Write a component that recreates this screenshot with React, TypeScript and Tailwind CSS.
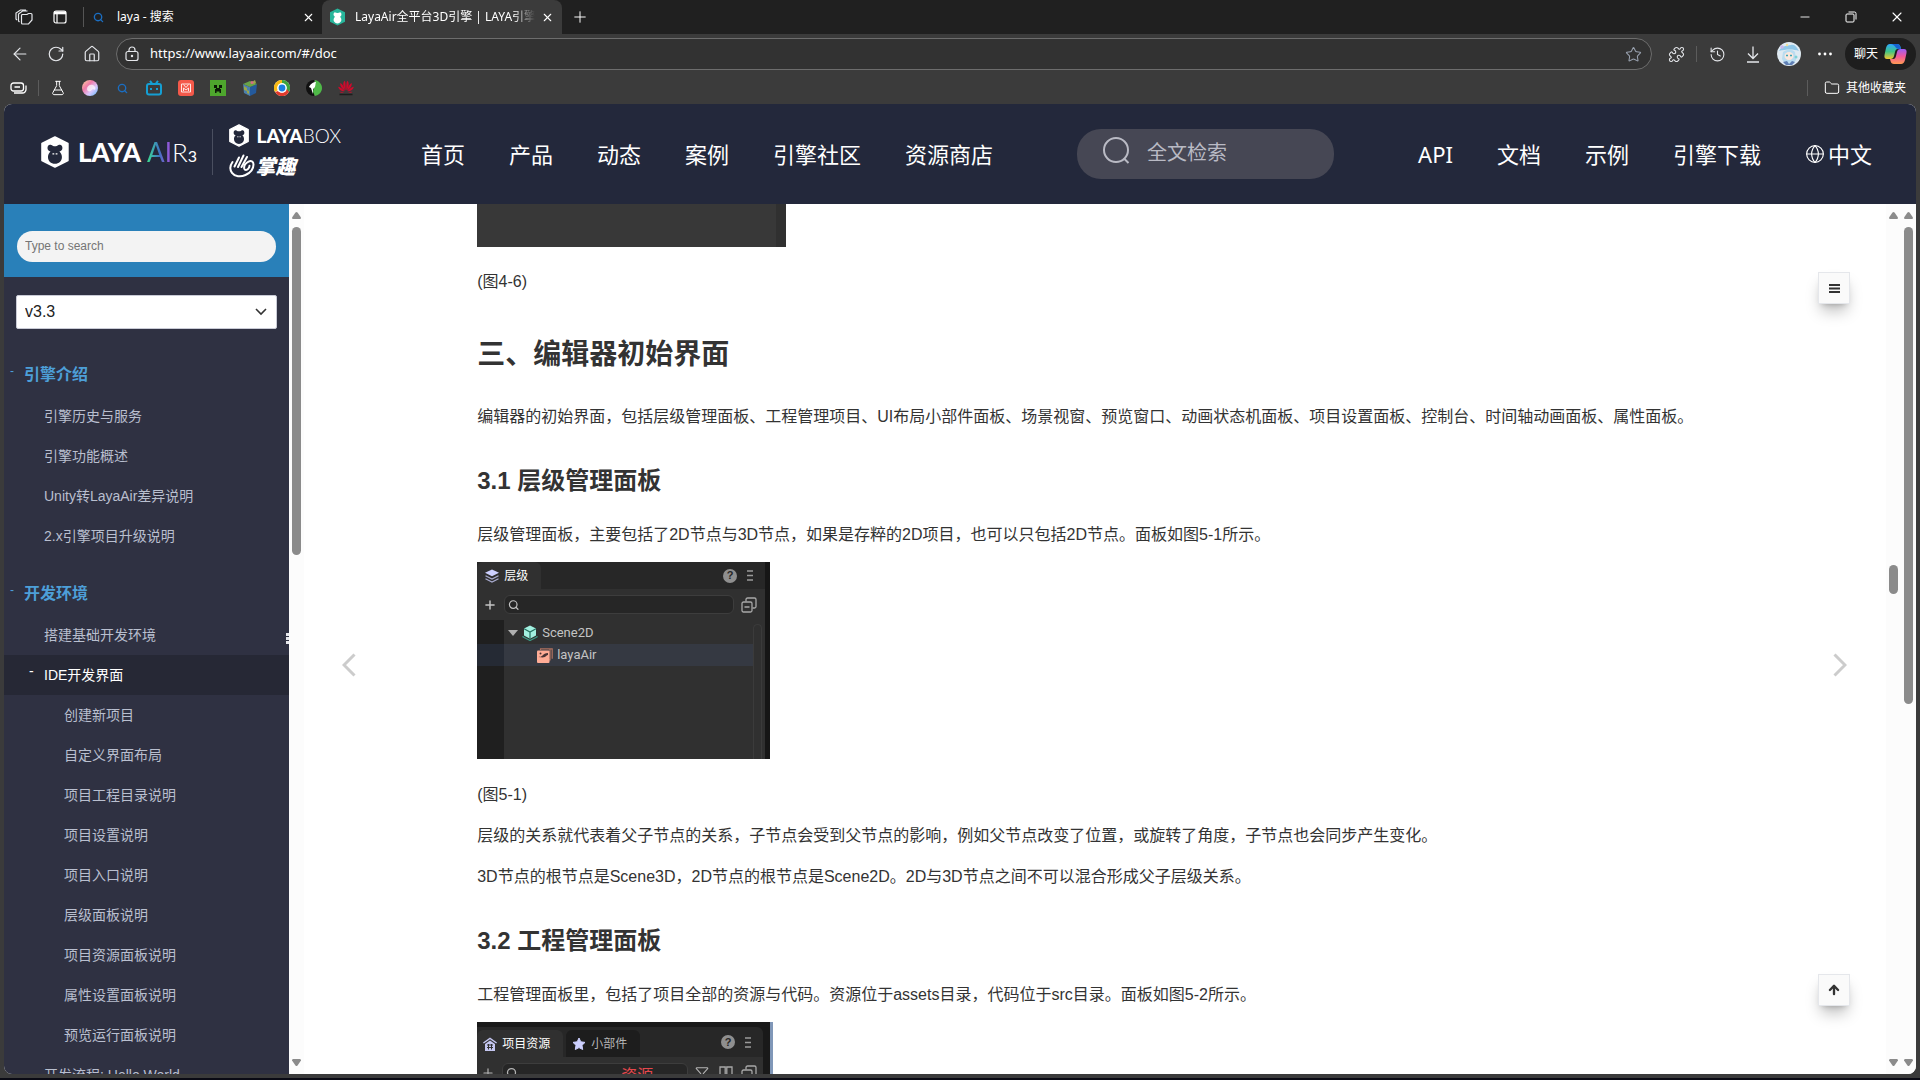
import React, { useState } from "react";
import {
  ArrowDown,
  ArrowLeft,
  FlaskConical,
  Folder,
  Funnel,
  Globe,
  History,
  House,
  Minus,
  Plus,
  Puzzle,
  RotateCw,
  Search,
  Star,
  X,
} from "lucide-react";

const mainLinks = ["首页", "产品", "动态", "案例", "引擎社区", "资源商店"];
const sideLinks = ["API", "文档", "示例", "引擎下载"];

const introItems = [
  "引擎历史与服务",
  "引擎功能概述",
  "Unity转LayaAir差异说明",
  "2.x引擎项目升级说明",
];

const ideItems = [
  "创建新项目",
  "自定义界面布局",
  "项目工程目录说明",
  "项目设置说明",
  "项目入口说明",
  "层级面板说明",
  "项目资源面板说明",
  "属性设置面板说明",
  "预览运行面板说明",
];

function Monkey({ className }: { className: string }) {
  return (
    <svg viewBox="0 0 28 32" className={className}>
      <path
        d="M14 1 27 7.500V24.500L14 31 1 24.500V7.500Z"
        fill="#fff"
        stroke="#fff"
        strokeWidth="1.600"
        strokeLinejoin="round"
      />
      <path
        d="M10.500 9C8 8 6.500 9.500 6.500 12c0 2 1.200 3.200 3 3.400C8 16.800 7 18.800 7 21c0 4 3 6.800 7 6.800s7-2.800 7-6.800c0-2.200-1-4.200-2.500-5.600 1.800-.2 3-1.400 3-3.400 0-2.500-1.500-4-4-3-1.200.9-2.200 1.200-3.500 1.200S11.700 9.900 10.500 9Z"
        fill="#23283b"
      />
      <path d="M11.500 17.800h1.800M14.700 17.800h1.800" stroke="#fff" strokeWidth="1.200" />
    </svg>
  );
}

function Hand() {
  return (
    <svg
      viewBox="0 0 26 24"
      className="h-6 w-[26px]"
      fill="none"
      stroke="#fff"
      strokeWidth="2"
      strokeLinecap="round"
    >
      <path d="M3.500 8C1 11.500.6 15.500 3 18.800c2.800 3.800 8.500 4.500 13.500 2.200 4.500-2 8-6 8-10.500 0-3-2.500-4.200-5-2.800-3 1.600-4.800 4.600-4.200 7 .5 1.800 2.600 1.600 3.800.2.900-1 1.400-2.200 1.400-3.200" />
      <path d="M5.500 12.500 10 3.500M9 13 14.500 1.500M12.500 13 18 3" />
    </svg>
  );
}

function Tabs() {
  return (
    <div className="flex h-[34px] shrink-0 items-center bg-[#202020] text-xs text-white">
      <button aria-label="工作区" className="ml-[15px] text-gray-200">
        <svg width="18" height="16" viewBox="0 0 18 16" fill="none" stroke="currentColor" strokeWidth="1.200">
          <path d="M7 5.500h5l1.500-1H16a1 1 0 0 1 1 1v5.500l-3.500 4H7.500A1 1 0 0 1 6.500 14V6.500Z" />
          <path d="M4.500 13 3.500 12V5l4-3h5M2 11 1 10V4l4.500-3H11" />
        </svg>
      </button>
      <button aria-label="标签页" className="ml-5">
        <svg width="14" height="14" viewBox="0 0 14 14" fill="none" stroke="#fff" strokeWidth="1.200">
          <rect x="1" y="1" width="12" height="12" rx="2" />
          <path d="M1 2.800h12" strokeWidth="3" />
          <path d="M4 4v9" />
        </svg>
      </button>
      <div className="ml-4 h-5 w-px bg-[#555]" />
      <div className="flex w-[238px] items-center pl-[9px]">
        <Search className="size-[11px] text-[#1b6ec2]" strokeWidth={3} />
        <span className="ml-[13px] flex-1">laya - 搜索</span>
        <button aria-label="关闭标签页">
          <X className="mr-[7px] size-[13px]" strokeWidth={2} />
        </button>
      </div>
      <div className="flex h-full w-[240px] items-center rounded-t-lg bg-[#3b3b3b] pl-2">
        <svg width="15" height="18" viewBox="0 0 28 32">
          <path d="M14 0 28 7v18l-14 7L0 25V7Z" fill="#28b59b" />
          <path
            d="M9 7c3 2 7 2 10 0 2 1 3 3 2 6-1 1-2 2-2 3 5 5 1 12-5 12S4 21 9 16c0-1-1-2-2-3-1-3 0-5 2-6Z"
            fill="#fff"
          />
        </svg>
        <span className="ml-[10px] w-[180px] overflow-hidden whitespace-nowrap mask-r-from-88%">
          LayaAir全平台3D引擎 | LAYA引擎官
        </span>
        <button aria-label="关闭标签页" className="ml-1.5">
          <X className="size-[13px]" strokeWidth={2} />
        </button>
      </div>
      <button aria-label="新建标签页" className="ml-[9px]">
        <Plus className="size-[18px]" strokeWidth={1.3} />
      </button>
      <div className="ml-auto flex items-center">
        <button aria-label="最小化" className="flex w-[46px] justify-center">
          <Minus className="size-[14px]" strokeWidth={1.5} />
        </button>
        <button aria-label="还原" className="flex w-[46px] justify-center">
          <svg width="12" height="12" viewBox="0 0 12 12" fill="none" stroke="#fff">
            <rect x="1" y="3" width="8" height="8" rx="1" />
            <path d="M3.500 1H9.500a1.500 1.500 0 0 1 1.500 1.500V8.500" />
          </svg>
        </button>
        <button aria-label="关闭" className="flex w-[46px] justify-center">
          <X className="size-4" strokeWidth={1.6} />
        </button>
      </div>
    </div>
  );
}

function AddressBar() {
  return (
    <div className="flex h-10 shrink-0 items-center bg-[#3b3b3b] text-gray-200">
      <button aria-label="后退" className="flex w-9 justify-center pl-1">
        <ArrowLeft className="size-5" strokeWidth={1.4} />
      </button>
      <button aria-label="刷新" className="flex w-9 justify-center pl-1">
        <RotateCw className="size-[18px]" strokeWidth={1.6} />
      </button>
      <button aria-label="主页" className="flex w-9 justify-center pl-1">
        <House className="size-[18px]" strokeWidth={1.6} />
      </button>
      <div className="ml-2 flex h-8 flex-1 items-center rounded-full border border-[#6d6d6d] bg-[#323232] pr-[9px] pl-2">
        <svg width="14" height="16" viewBox="0 0 14 16" fill="none" stroke="currentColor" strokeWidth="1.200">
          <rect x="1" y="5.500" width="12" height="9" rx="2" />
          <path d="M4 5.500V4a3 3 0 0 1 6 0v1.500" />
          <circle cx="7" cy="10" r=".6" fill="currentColor" />
        </svg>
        <input
          aria-label="地址"
          className="ml-[11px] flex-1 bg-transparent text-[13px] text-white outline-none"
          defaultValue="https://www.layaair.com/#/doc"
        />
        <Star className="size-[17px] text-gray-400" strokeWidth={1.5} />
      </div>
      <button aria-label="扩展" className="ml-4">
        <Puzzle className="size-[17px]" strokeWidth={1.5} />
      </button>
      <div className="ml-[11px] h-4 w-px bg-[#5c5c5c]" />
      <button aria-label="历史记录" className="ml-3">
        <History className="size-[17px]" strokeWidth={1.5} />
      </button>
      <button aria-label="下载" className="ml-5">
        <svg width="14" height="17" viewBox="0 0 14 17" fill="none" stroke="currentColor" strokeWidth="1.300">
          <path d="M7 .5V12M2 7.500l5 5 5-5M1 16h12" />
        </svg>
      </button>
      <button aria-label="个人资料" className="ml-[17px]">
        <svg width="24" height="24" viewBox="0 0 24 24">
          <circle cx="12" cy="12" r="12" fill="#dfeaf2" />
          <path d="M2 9C5 3 10 4 14 3s6 3 8 6c-5-2-13-2-20 0Z" fill="#8fc7e8" />
          <path d="M6 10c4-3 9-3 12 0l1 8-3 4H8l-3-5Z" fill="#b9dcf0" />
          <ellipse cx="12" cy="14" rx="4.500" ry="4" fill="#fbe7dd" />
          <path d="M9 13.500h2M13 13.500h2" stroke="#3aa6b9" strokeWidth="1.600" />
          <circle cx="5" cy="5" r="1.800" fill="#c9b6ea" />
          <circle cx="10" cy="3" r="1.200" fill="#efdf9a" />
          <circle cx="19" cy="15" r="1.500" fill="#7fd0d6" />
          <path d="M6 20l4-1 2 3 3-3 3 1-3 3H9Z" fill="#5f7fb5" />
        </svg>
      </button>
      <button aria-label="设置及其他" className="ml-[17px]">
        <svg width="14" height="4" viewBox="0 0 14 4" fill="#fff">
          <circle cx="1.500" cy="2" r="1.400" />
          <circle cx="7" cy="2" r="1.400" />
          <circle cx="12.500" cy="2" r="1.400" />
        </svg>
      </button>
      <button className="mr-1 ml-[13px] flex h-8 w-[71px] items-center justify-center gap-1.5 rounded-full bg-[#1e1e1e] text-xs text-white">
        聊天
        <svg width="23" height="20" viewBox="0 0 23 20">
          <defs>
            <linearGradient id="cpA" x1="0" y1="0" x2="0" y2="1">
              <stop offset="0" stopColor="#2fa8ff" />
              <stop offset=".5" stopColor="#3ec486" />
              <stop offset="1" stopColor="#f2c730" />
            </linearGradient>
            <linearGradient id="cpB" x1="0" y1="0" x2="0" y2="1">
              <stop offset="0" stopColor="#9b5cf6" />
              <stop offset=".5" stopColor="#f2589a" />
              <stop offset="1" stopColor="#ff9a52" />
            </linearGradient>
          </defs>
          <path d="M6 0h7c2 0 3 1 3.500 3l.5 2h-3c-2 0-2.500 1-3 3l-1 4c-.5 2-1.500 3-3.500 3H3c-2 0-3-1.500-2.500-4L2 4c.7-2.500 2-4 4-4Z" fill="url(#cpA)" />
          <path d="M6 0h7c2 0 3 1 3.500 3l.5 2h-3L12 4C11 2 9 0 6 0Z" fill="#1763d1" />
          <path d="M17 20h-7c-2 0-3-1-3.500-3L6 15h3c2 0 2.500-1 3-3l1-4c.5-2 1.500-3 3.500-3H20c2 0 3 1.500 2.500 4L21 16c-.7 2.500-2 4-4 4Z" fill="url(#cpB)" />
        </svg>
      </button>
    </div>
  );
}

function Bookmarks() {
  return (
    <div className="flex h-[30px] shrink-0 items-center bg-[#3b3b3b] pb-0.5 text-xs text-white">
      <button aria-label="收藏夹" className="ml-[10px]">
        <svg width="17" height="12" viewBox="0 0 17 12" fill="none" stroke="#fff" strokeWidth="1.300">
          <rect x="1" y="1" width="12.500" height="8" rx="2.500" />
          <path d="M4.500 5h5.500M4 11h8.500a3.500 3.500 0 0 0 3.500-3.500V3.500" />
        </svg>
      </button>
      <div className="ml-[11px] h-4 w-px bg-[#5c5c5c]" />
      <div className="ml-[11px] flex gap-4">
        <a href="#lab" aria-label="实验">
          <FlaskConical className="size-4" strokeWidth={1.5} />
        </a>
        <a href="#ball" aria-label="彩球">
          <svg width="16" height="16" viewBox="0 0 16 16">
            <defs>
              <linearGradient id="ball" x1="0" y1="0" x2="1" y2="1">
                <stop offset="0" stopColor="#ffd9a0" />
                <stop offset=".35" stopColor="#f07ba8" />
                <stop offset=".65" stopColor="#d9c8ff" />
                <stop offset="1" stopColor="#58b6f5" />
              </linearGradient>
            </defs>
            <circle cx="8" cy="8" r="8" fill="url(#ball)" />
            <path d="M5 9c0-3 3-5 6-4 2 1 3 3 2 5-1-1-3-1-4 1-2 1-4 0-4-2Z" fill="#fff" opacity=".7" />
          </svg>
        </a>
        <a href="#search" aria-label="搜索" className="flex size-4 items-center justify-center">
          <Search className="size-[11px] text-[#1b6ec2]" strokeWidth={3} />
        </a>
        <a href="#video" aria-label="视频">
          <svg width="16" height="16" viewBox="0 0 16 16" fill="none" stroke="#159fd3" strokeWidth="2">
            <rect x="1" y="4" width="14" height="10.500" rx="2" />
            <path d="M4 .8 6 3.500M12 .8 10 3.500M5 8v2M11 8v2" />
          </svg>
        </a>
        <a href="#red" aria-label="红书">
          <svg width="16" height="16" viewBox="0 0 16 16">
            <rect width="16" height="16" rx="3" fill="#f4594a" />
            <path d="M3.500 4h9v8h-9ZM5.500 4.500l2.500 3 2.500-3M5.500 11V8l2.500 2 2.500-2v3" fill="none" stroke="#ffe6e2" />
          </svg>
        </a>
        <a href="#mc" aria-label="方块">
          <svg width="16" height="16" viewBox="0 0 16 16">
            <rect width="16" height="16" fill="#4ea62d" />
            <path d="M4 5h3v3h2V5h3v3h-2v1h1v4h-1.500v-1.500h-3V13H5V9h1V8H4Z" fill="#0b1a06" />
          </svg>
        </a>
        <a href="#cube" aria-label="立方体">
          <svg width="16" height="16" viewBox="0 0 16 16">
            <path d="M1 4 8 7v9l-6-3Z" fill="#4b7fae" />
            <path d="M15 4 8 7v9l6-3Z" fill="#245a9c" />
            <path d="M1 4 8 1l7 3-7 3Z" fill="#68a248" />
            <path d="M2 6l3 2v3l-3-1ZM10 2l3-2 1 3-3 1ZM5 10l2 1v3l-2-1Z" fill="#9aa64a" />
            <circle cx="10" cy="2.500" r="1.500" fill="#d66a86" />
          </svg>
        </a>
        <a href="#ring" aria-label="圆环">
          <svg width="16" height="16" viewBox="0 0 16 16">
            <circle cx="8" cy="8" r="8" fill="#fff" />
            <path d="M8 0A8 8 0 0 0 1 12l3-2a5 5 0 0 1 4-7Z" fill="#f8b912" />
            <path d="M8 0a8 8 0 0 1 7 12l-3-2A5 5 0 0 0 8 3Z" fill="#3fa53c" />
            <path d="M1 12a8 8 0 0 0 14 0l-2-3a5.500 5.500 0 0 1-9 2Z" fill="#e03a2c" />
            <circle cx="8" cy="8" r="4.800" fill="#fff" />
            <circle cx="8" cy="8" r="3.400" fill="#1b7fe0" />
          </svg>
        </a>
        <a href="#leaf" aria-label="叶子">
          <svg width="16" height="16" viewBox="0 0 16 16">
            <path d="M8 0a8 8 0 0 0 0 16Z" fill="#111" />
            <path d="M9 0c4 1 7 4 7 8s-3 7-7 8L7 12Z" fill="#4fb948" />
            <path d="M3 7c2-4 5-5 7-5-1 3 0 5-3 7v5L5 8Z" fill="#fff" />
          </svg>
        </a>
        <a href="#huawei" aria-label="华为">
          <svg width="16" height="16" viewBox="0 0 16 16" fill="#cf0a2c">
            <path d="M7.600 10.500C5 7 4.500 3 6.500.8c1 .2 1.400 4 1.100 9.700ZM8.400 10.500C11 7 11.500 3 9.500.8c-1 .2-1.400 4-1.100 9.700Z" />
            <path d="M7 10.800C4 9 1.800 6 2.300 3c2 .8 4 4 4.700 7.800ZM9 10.800c3-1.800 5.200-4.800 4.700-7.800-2 .8-4 4-4.700 7.800Z" />
            <path d="M6.500 11.300C3 11.300.5 9.300.3 6.800c2 .3 4.500 2 6.200 4.500ZM9.500 11.300c3.500 0 6-2 6.200-4.500-2 .3-4.500 2-6.200 4.500ZM6 12c-1.500 1-3.500.8-4.500-.2ZM10 12c1.500 1 3.500.8 4.500-.2Z" />
            <path d="M1.500 14.500h13" stroke="#1d1d1d" strokeWidth="1.500" />
          </svg>
        </a>
      </div>
      <div className="mr-4 ml-auto h-4 w-px bg-[#5c5c5c]" />
      <a href="#other" className="mr-[14px] flex items-center gap-1.5">
        <Folder className="size-4" strokeWidth={1.5} />
        其他收藏夹
      </a>
    </div>
  );
}

function SiteHeader() {
  return (
    <header className="flex h-[100px] shrink-0 items-center bg-[#23283b] pr-11 pl-[37px] font-['Noto_Sans','Noto_Sans_CJK_SC',sans-serif] text-[22px] text-white">
      <a href="#home" className="flex w-[300px] shrink-0 items-center pb-[5px] font-['Lato',sans-serif]">
        <Monkey className="h-8 w-7" />
        <span className="ml-[9px] flex w-[127px] items-baseline text-[26px] leading-8">
          <span className="font-black">LAYA</span>
          <span className="ml-1.5 bg-linear-to-r from-[#3fe08a] via-[#3f6fc0] to-[#a44ae0] bg-clip-text text-transparent">
            AI
          </span>
          <span className="font-light">R</span>
          <span className="text-base">3</span>
        </span>
        <span className="ml-2 h-[46px] w-px bg-[#4a4f60]" />
        <span className="ml-4 flex flex-col">
          <span className="flex items-center text-[19px] leading-7">
            <Monkey className="h-[23px] w-5" />
            <span className="ml-[7px] font-black">LAYA</span>
            <span className="font-light">BOX</span>
          </span>
          <span className="flex items-center text-xl leading-8 font-black italic">
            <Hand />
            <span className="font-['Noto_Sans_CJK_SC',sans-serif]">掌趣</span>
          </span>
        </span>
      </a>
      <nav className="ml-20 flex gap-11 whitespace-nowrap">
        {mainLinks.map((link) => (
          <a key={link} href={`#${link}`}>
            {link}
          </a>
        ))}
      </nav>
      <label className="ml-[84px] flex h-[50px] w-[257px] items-center rounded-[24px] bg-[#464754] pb-0.5 pl-[25px]">
        <svg className="mb-1.5" width="28" height="28" viewBox="0 0 28 28" fill="none" stroke="#b9bac4" strokeWidth="2">
          <circle cx="14" cy="14" r="12" />
          <path d="m22 22.500 4.500 4.500" />
        </svg>
        <input
          aria-label="全文检索"
          placeholder="全文检索"
          className="ml-[17px] w-40 bg-transparent text-xl outline-none placeholder:text-[#b9bac4]"
        />
      </label>
      <nav className="ml-auto flex gap-11 whitespace-nowrap">
        {sideLinks.map((link) => (
          <a key={link} href={`#${link}`}>
            {link}
          </a>
        ))}
        <a href="#lang" className="flex items-center gap-[3px]">
          <Globe className="size-5" strokeWidth={1.4} />
          中文
        </a>
      </nav>
    </header>
  );
}

function Chapter({ title }: { title: string }) {
  return (
    <div className="flex h-[59px] items-center pt-4 pl-1.5 font-bold text-[#4d9fd8]">
      <span className="w-[14px] pb-2 text-xs font-normal">-</span>
      {title}
    </div>
  );
}

function Sidebar() {
  const [version, setVersion] = useState("v3.3");
  const [query, setQuery] = useState("");

  return (
    <aside className="relative w-[285px] shrink-0 overflow-hidden bg-[#2f3142] text-[#b9bfcf]">
      <div className="h-[73px] bg-[#2980b9] px-[13px] pt-[27px]">
        <input
          value={query}
          onChange={(e) => setQuery(e.target.value)}
          aria-label="Type to search"
          placeholder="Type to search"
          className="h-[31px] w-full rounded-full bg-[#f3f3f3] px-2 pb-0.5 text-xs text-gray-800 outline-none placeholder:text-[#757575]"
        />
      </div>
      <div className="relative mx-3 mt-[18px] mb-2">
        <select
          value={version}
          onChange={(e) => setVersion(e.target.value)}
          aria-label="version"
          className="block h-[34px] w-full appearance-none rounded-xs border border-[#c9cbd6] bg-white px-2 text-base text-[#222]"
        >
          <option>v3.3</option>
          <option>v3.2</option>
        </select>
        <svg
          className="pointer-events-none absolute top-[13px] right-[10px]"
          width="12"
          height="8"
          viewBox="0 0 12 8"
          fill="none"
          stroke="#333"
          strokeWidth="1.600"
        >
          <path d="m1 1 5 5 5-5" />
        </svg>
      </div>
      <Chapter title="引擎介绍" />
      <ul className="text-sm leading-10">
        {introItems.map((item) => (
          <li key={item} className="pl-10">
            <a href={`#${item}`}>{item}</a>
          </li>
        ))}
      </ul>
      <Chapter title="开发环境" />
      <ul className="text-sm leading-10">
        <li className="pl-10">
          <a href="#env">搭建基础开发环境</a>
        </li>
        <li className="flex bg-[#262835] pl-[25px] text-white">
          <span className="w-[15px] pb-1 leading-8">-</span>
          <a href="#ide">IDE开发界面</a>
        </li>
        {ideItems.map((item) => (
          <li key={item} className="pl-[60px]">
            <a href={`#${item}`}>{item}</a>
          </li>
        ))}
        <li className="pl-10">
          <a href="#hello">开发流程: Hello World</a>
        </li>
      </ul>
      {/* resize handle */}
      <div className="absolute top-[429px] right-0 flex flex-col gap-px">
        <span className="h-[3px] w-[3px] bg-gray-200" />
        <span className="h-[3px] w-[3px] bg-gray-200" />
        <span className="h-[3px] w-[3px] bg-gray-200" />
      </div>
    </aside>
  );
}

function Scrollbar({ start, size }: { start: number; size: number }) {
  return (
    <div className="flex w-[15px] shrink-0 flex-col items-center bg-[#fcfcfc] py-2">
      <svg width="9" height="7" viewBox="0 0 9 7" fill="#8b8b8b">
        <path d="M3.500.6Q4.500-.5 5.500.6L9 5.500Q9 7 8 7H1Q0 7 0 5.500Z" />
      </svg>
      <div className="mt-2 mb-1 w-[9px] flex-1">
        <div style={{ height: `${start}%` }} />
        <div className="rounded-full bg-[#8b8b8b]" style={{ height: `${size}%` }} />
      </div>
      <svg width="9" height="7" viewBox="0 0 9 7" fill="#8b8b8b">
        <path d="M3.500 6.400Q4.500 7.500 5.500 6.400L9 1.500Q9 0 8 0H1Q0 0 0 1.500Z" />
      </svg>
    </div>
  );
}

function HelpIcon() {
  return (
    <span className="flex size-[14px] items-center justify-center rounded-full bg-[#8f8f8f] text-[11px] leading-none font-bold text-[#272727]">
      ?
    </span>
  );
}

function MenuIcon() {
  return (
    <svg width="8" height="11" viewBox="0 0 8 11" stroke="#9a9a9a" strokeWidth="1.500">
      <path d="M1 1h6M1 5.500h6M1 10h6" />
    </svg>
  );
}

function CollapseIcon() {
  return (
    <svg width="16" height="16" viewBox="0 0 16 16" fill="none" stroke="#a8a8a8" strokeWidth="1.300">
      <rect x="1" y="5" width="10" height="10" rx="1.500" />
      <path d="M3.500 10h5M5 4.500V2.500A1.500 1.500 0 0 1 6.500 1h7A1.500 1.500 0 0 1 15 2.500v7a1.500 1.500 0 0 1-1.500 1.500H11.500" />
    </svg>
  );
}

function HierarchyPanel() {
  return (
    <div className="flex h-[197px] w-[293px] flex-col border-r-5 border-[#161616] bg-[#303030] text-xs text-[#c4c4c4]">
      <div className="flex h-[27px] items-center bg-[#272727] pr-[11px]">
        <div className="mr-auto flex h-full w-16 items-center gap-[5px] rounded-t-md bg-[#303030] pl-2 text-white">
          <svg width="14" height="14" viewBox="0 0 14 14">
            <path d="M0 3.800 7 .5l7 3.300L7 7.200Z" fill="#cdd0ff" />
            <path d="M.5 6.800 7 10l6.500-3.200M.5 9.800 7 13l6.500-3.200" fill="none" stroke="#a9abcf" strokeWidth="1.200" />
          </svg>
          层级
        </div>
        <HelpIcon />
        <span className="ml-[9px]">
          <MenuIcon />
        </span>
      </div>
      <div className="flex h-[31px] items-center pr-2 pl-1.5">
        <Plus className="size-[14px]" strokeWidth={2.5} />
        <label className="mr-[7px] ml-[7px] flex h-[19px] flex-1 items-center rounded-md border border-[#3d3d3d] bg-[#262626] pl-[3px]">
          <Search className="size-3" strokeWidth={2.5} />
          <input aria-label="搜索节点" className="w-full bg-transparent outline-none" />
        </label>
        <CollapseIcon />
      </div>
      <div className="flex flex-1">
        <div className="w-[27px] bg-[#1f1f1f] pt-6">
          <div className="h-[22px] bg-[#252a34]" />
        </div>
        <div className="flex-1 pt-0.5 font-['Roboto',sans-serif] text-[13px]">
          <div className="flex h-[22px] items-center pl-1">
            <svg width="10" height="6" viewBox="0 0 10 6" fill="#b0b0b0">
              <path d="M0 0h10L5 6Z" />
            </svg>
            <svg className="mr-1 ml-1" width="16" height="16" viewBox="0 0 16 16">
              <path d="M1 11v1l7 3.500 7-3.500v-1" fill="none" stroke="#3d9c88" strokeWidth="1.200" />
              <path d="M8 .5 14 3.500v7L8 13.800 2 10.500v-7Z" fill="#a2f0e0" />
              <path d="M2 3.800 8 7l6-3.200M8 7v7" fill="none" stroke="#24705f" strokeWidth="1.200" />
            </svg>
            Scene2D
          </div>
          <div className="flex h-[22px] items-center bg-[#353942] pl-[33px]">
            <svg className="mr-1" width="16" height="15" viewBox="0 0 16 15">
              <path d="M3.500 2V.8h9.500v11h-1M6 .8h9.200v10" fill="none" stroke="#b0715f" strokeWidth="1.200" />
              <rect x="0" y="2.500" width="12.500" height="12.500" rx="1" fill="#ffac96" />
              <path d="M1.500 9c1.500-.5 2.500 0 4-1.500S8 5 11 5v2C9.500 7 9 9 7 9.300S3.500 9 1.500 9Z" fill="#4a3335" />
              <circle cx="3.500" cy="5.500" r="1" fill="#4a3335" />
            </svg>
            layaAir
          </div>
        </div>
        <div className="mt-1 mr-[3px] w-[9px] rounded-t-md border border-b-0 border-[#3b3b3b]" />
      </div>
    </div>
  );
}

function AssetsPanel() {
  return (
    <div className="flex w-[296px] flex-col border-r-3 border-[#8097b8] bg-[#191919] pt-[5px] pr-[7px] text-xs text-[#b5b5b5]">
      <div className="flex h-[30px] items-end rounded-tr-md bg-[#272727] pr-[11px]">
        <div className="flex h-[27px] w-[86px] items-center gap-[5px] rounded-t-md bg-[#303030] pl-1.5 text-white">
          <svg width="14" height="14" viewBox="0 0 14 14" fill="#c4c6f0">
            <path d="M7 .5 14 5.500l-.8 1L7 2.200.8 6.500 0 5.500ZM7 3.500 12 7v7H2V7Z" />
            <path d="M4 8h6M4 10.500h6M5.500 7v5.500M8.500 7v5.500" stroke="#303030" />
          </svg>
          项目资源
        </div>
        <div className="mr-auto ml-[3px] flex h-[27px] w-[74px] items-center gap-[5px] rounded-t-md bg-[#1d1d1d] pl-1.5">
          <svg width="14" height="14" viewBox="0 0 14 14">
            <path
              d="m7 1 1.800 3.800 4.200.6-3 2.900.7 4.200L7 10.600l-3.700 1.900.7-4.200-3-2.900 4.200-.6Z"
              fill="#cdd0ff"
              stroke="#cdd0ff"
              strokeLinejoin="round"
            />
          </svg>
          小部件
        </div>
        <span className="self-center">
          <HelpIcon />
        </span>
        <span className="ml-[9px] self-center">
          <MenuIcon />
        </span>
      </div>
      <div className="flex h-[31px] items-center bg-[#303030] pr-1.5 pl-1">
        <Plus className="size-[14px]" strokeWidth={2} />
        <div className="mr-[7px] ml-[7px] flex h-[19px] flex-1 items-center rounded-md border border-[#3d3d3d] bg-[#262626] pl-[3px]">
          <Search className="size-3" strokeWidth={2.5} />
          <span className="ml-[103px] pt-1.5 text-base leading-5 text-[#e5484d]">资源</span>
        </div>
        <Funnel className="size-[14px]" strokeWidth={1.8} />
        <svg className="mr-2 ml-2.5" width="14" height="14" viewBox="0 0 14 14" fill="none" stroke="#a8a8a8" strokeWidth="1.300">
          <path d="M1 1h5.200v12H1ZM7.800 1H13v12H7.800Z" />
        </svg>
        <CollapseIcon />
      </div>
      <div className="h-40 bg-[#303030]" />
    </div>
  );
}

function Article() {
  return (
    <article className="mx-auto w-4/5 px-[15px] leading-[27px] text-[#333]">
      <div className="mb-[21px] h-[43px] w-[309px] border-r-10 border-[#303030] bg-[#383838]" />
      <p>(图4-6)</p>
      <h2 className="mt-9 mb-6 text-[28px] leading-[48px] font-bold">三、编辑器初始界面</h2>
      <p>
        编辑器的初始界面，包括层级管理面板、工程管理项目、UI布局小部件面板、场景视窗、预览窗口、动画状态机面板、项目设置面板、控制台、时间轴动画面板、属性面板。
      </p>
      <h3 className="mt-[30px] mb-5 text-2xl leading-[41px] font-bold">3.1 层级管理面板</h3>
      <p className="mb-[14px]">
        层级管理面板，主要包括了2D节点与3D节点，如果是存粹的2D项目，也可以只包括2D节点。面板如图5-1所示。
      </p>
      <HierarchyPanel />
      <p className="mt-[22px] mb-[14px]">(图5-1)</p>
      <p className="mb-[14px]">
        层级的关系就代表着父子节点的关系，子节点会受到父节点的影响，例如父节点改变了位置，或旋转了角度，子节点也会同步产生变化。
      </p>
      <p>
        3D节点的根节点是Scene3D，2D节点的根节点是Scene2D。2D与3D节点之间不可以混合形成父子层级关系。
      </p>
      <h3 className="mt-[30px] mb-5 text-2xl leading-[41px] font-bold">3.2 工程管理面板</h3>
      <p className="mb-[14px]">
        工程管理面板里，包括了项目全部的资源与代码。资源位于assets目录，代码位于src目录。面板如图5-2所示。
      </p>
      <AssetsPanel />
    </article>
  );
}

export default function App() {
  return (
    <div className="flex h-screen flex-col overflow-hidden border-b-2 border-[#0a0a14] bg-[#3b3b3b] font-['Noto_Sans','Noto_Sans_CJK_SC',sans-serif]">
      <Tabs />
      <AddressBar />
      <Bookmarks />
      <div className="mx-1 mb-1 flex min-h-0 flex-1 flex-col overflow-hidden rounded-lg bg-white font-['Liberation_Sans','Noto_Sans_CJK_SC',sans-serif]">
        <SiteHeader />
        <div className="flex min-h-0 flex-1">
          <Sidebar />
          <Scrollbar start={0} size={39.6} />
          <main className="relative min-w-0 flex-1 overflow-hidden">
            <Article />
            <button
              aria-label="目录"
              className="absolute top-[68px] right-9 flex size-8 items-center justify-center border border-gray-200 bg-[#fafafa] shadow-lg shadow-black/25"
            >
              <svg width="11" height="9" viewBox="0 0 11 9" stroke="#333" strokeWidth="1.800">
                <path d="M0 1h11M0 4.500h11M0 8h11" />
              </svg>
            </button>
            <button
              aria-label="回到顶部"
              className="absolute right-9 bottom-[68px] flex size-8 items-center justify-center border border-gray-200 bg-[#fafafa] shadow-lg shadow-black/25"
            >
              <ArrowDown className="size-[14px] rotate-180 text-[#333]" strokeWidth={4} />
            </button>
            <a href="#prev" aria-label="上一页" className="absolute top-[449px] left-[38px]">
              <svg width="14" height="24" viewBox="0 0 14 24" fill="none" stroke="#ccc" strokeWidth="3">
                <path d="M12.500 1.500 2 12l10.500 10.500" />
              </svg>
            </a>
            <a href="#next" aria-label="下一页" className="absolute top-[449px] right-[39px]">
              <svg width="14" height="24" viewBox="0 0 14 24" fill="none" stroke="#ccc" strokeWidth="3">
                <path d="M1.500 1.500 12 12 1.500 22.500" />
              </svg>
            </a>
          </main>
          <Scrollbar start={40.8} size={3.5} />
          <Scrollbar start={0} size={57.6} />
        </div>
      </div>
    </div>
  );
}
